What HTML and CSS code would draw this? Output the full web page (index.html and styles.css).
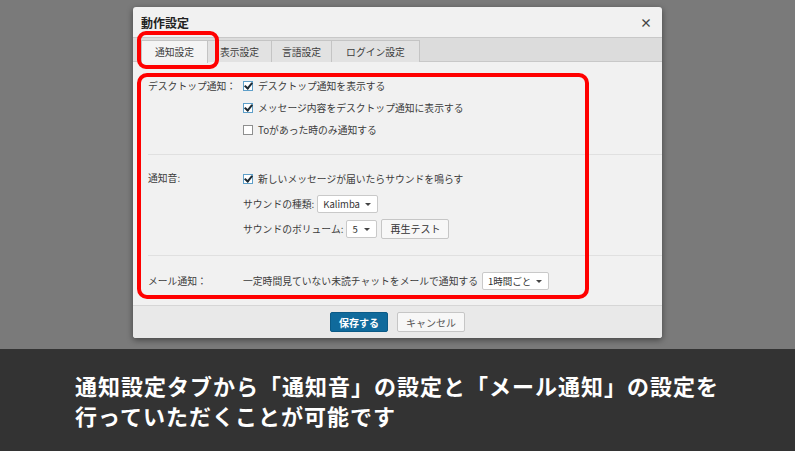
FILE: index.html
```html
<!DOCTYPE html>
<html lang="ja">
<head>
    <meta charset="UTF-8">
    <title>動作設定</title>
    <link rel="stylesheet" href="styles.css">
</head>
<body>
    <div class="stage">
        <div class="dialog">
            <div class="dialog-header">
                <div class="dialog-title">動作設定</div>
                <div class="dialog-close">×</div>
            </div>

            <div class="tab-bar">
                <div class="tab active">通知設定</div>
                <div class="tab">表示設定</div>
                <div class="tab">言語設定</div>
                <div class="tab">ログイン設定</div>
            </div>

            <div class="dialog-body">
                <div class="section section-desktop">
                    <div class="section-label">デスクトップ通知：</div>
                    <div class="section-controls">
                        <div class="row"><span class="check checked"></span>デスクトップ通知を表示する</div>
                        <div class="row"><span class="check checked"></span>メッセージ内容をデスクトップ通知に表示する</div>
                        <div class="row"><span class="check"></span>Toがあった時のみ通知する</div>
                    </div>
                </div>

                <div class="section section-sound">
                    <div class="section-label">通知音:</div>
                    <div class="section-controls">
                        <div class="row"><span class="check checked"></span>新しいメッセージが届いたらサウンドを鳴らす</div>
                        <div class="row">サウンドの種類:<span class="select select-kalimba">Kalimba<span class="caret"></span></span></div>
                        <div class="row">サウンドのボリューム:<span class="select select-volume">5<span class="caret"></span></span><span class="btn btn-test">再生テスト</span></div>
                    </div>
                </div>

                <div class="section section-mail">
                    <div class="section-label">メール通知：</div>
                    <div class="section-controls">
                        <div class="row">一定時間見ていない未読チャットをメールで通知する<span class="select select-interval">1時間ごと<span class="caret"></span></span></div>
                    </div>
                </div>
            </div>

            <div class="dialog-footer">
                <span class="btn btn-primary">保存する</span>
                <span class="btn btn-cancel">キャンセル</span>
            </div>

            <!-- annotation marks -->
            <div class="mark mark-tab"></div>
            <div class="mark mark-body"></div>
        </div>
    </div>

    <div class="caption">
        <p>通知設定タブから「通知音」の設定と「メール通知」の設定を</p>
        <p>行っていただくことが可能です</p>
    </div>
</body>
</html>
```

FILE: styles.css
```css
* {
    margin: 0;
    padding: 0;
    box-sizing: border-box;
}

body {
    width: 795px;
    height: 451px;
    overflow: hidden;
    font-family: "Noto Sans CJK JP", "Noto Sans", sans-serif;
    background: #333333;
}

.stage {
    height: 349px;
    background: #7a7a7a;
    padding-top: 7px;
    display: flex;
    justify-content: center;
    align-items: flex-start;
}

.dialog {
    position: relative;
    width: 529px;
    height: 331px;
    background: #f1f1f1;
    border-radius: 3px;
    box-shadow: 0 2px 6px rgba(0, 0, 0, 0.45);
    display: flex;
    flex-direction: column;
    color: #3c3c3c;
    font-size: 9.8px;
}

.dialog-header {
    height: 30px;
    padding: 0 10px 0 8px;
    display: flex;
    align-items: center;
    justify-content: space-between;
}

.dialog-title {
    font-size: 12px;
    font-weight: bold;
    color: #222;
    padding-top: 1px;
}

.dialog-close {
    font-size: 12px;
    font-weight: bold;
    color: #444;
}

.tab-bar {
    height: 25px;
    background: #dcdcdc;
    border-top: 1px solid #c8c8c8;
    border-bottom: 1px solid #c8c8c8;
    padding: 2px 0 0 8px;
    display: flex;
    align-items: stretch;
}

.tab {
    display: flex;
    align-items: center;
    justify-content: center;
    height: 22px;
    background: #e2e2e2;
    border: 1px solid #c4c4c4;
    border-left: none;
    border-bottom: none;
    color: #3c3c3c;
}

.tab:nth-child(2) { width: 64px; }
.tab:nth-child(3) { width: 60px; }
.tab:nth-child(4) { width: 88px; }

.tab.active {
    width: 67px;
    height: 23px;
    background: #f4f4f4;
    border-left: 1px solid #c4c4c4;
}

.dialog-body {
    flex: 1;
    padding: 0 0 0 15px;
    border-bottom: 1px solid #d6d6d6;
}

.section {
    display: flex;
    border-bottom: 1px solid #e0e0e0;
}

.section:last-child {
    border-bottom: none;
}

.section-desktop { padding: 13px 0 13px; }
.section-sound { padding: 11px 0 14px; }
.section-mail { padding: 13px 0 12px; }

.section-label {
    width: 95px;
    flex-shrink: 0;
    line-height: 22px;
}

.section-sound .section-label,
.section-mail .section-label {
    line-height: 24px;
}

.section-controls {
    display: flex;
    flex-direction: column;
}

.row {
    height: 22px;
    display: flex;
    align-items: center;
    white-space: nowrap;
}

.section-sound .row {
    height: 25px;
}

.section-mail .row {
    height: 24px;
}

.check {
    width: 10px;
    height: 10px;
    border: 1px solid #8e8f8f;
    background: #fff;
    margin-right: 5px;
    position: relative;
    flex-shrink: 0;
}

.check.checked {
    border-color: #5e9fc9;
}

.check.checked::after {
    content: '';
    position: absolute;
    left: 2px;
    top: -1px;
    width: 3px;
    height: 6px;
    border-right: 2px solid #1d2a33;
    border-bottom: 2px solid #1d2a33;
    transform: rotate(40deg);
}

.select {
    display: inline-flex;
    align-items: center;
    height: 18px;
    background: #fff;
    border: 1px solid #c9c9c9;
    border-radius: 2px;
    padding: 0 17px 0 5px;
    color: #333;
    position: relative;
    font-size: 9.5px;
}

.select-kalimba { margin-left: 3px; }
.select-volume { width: 31px; margin-left: 3px; }
.select-interval { margin-left: 4px; }

.caret {
    position: absolute;
    right: 6px;
    top: 7px;
    border-left: 3px solid transparent;
    border-right: 3px solid transparent;
    border-top: 3px solid #444;
}

.btn {
    display: inline-flex;
    align-items: center;
    justify-content: center;
    height: 20px;
    border-radius: 2px;
    font-size: 10px;
}

.btn-test {
    width: 68px;
    margin-left: 4px;
    background: #f7f7f7;
    border: 1px solid #c6c6c6;
    color: #333;
}

.dialog-footer {
    height: 32px;
    background: #e9e9e9;
    display: flex;
    justify-content: center;
    align-items: center;
    gap: 9px;
    border-radius: 0 0 3px 3px;
}

.btn-primary {
    width: 58px;
    background: #0f6a9c;
    border: 1px solid #0b5a86;
    color: #fff;
    font-weight: bold;
}

.btn-cancel {
    width: 68px;
    background: #f7f7f7;
    border: 1px solid #c6c6c6;
    color: #555;
}

/* red annotation frames */
.mark {
    position: absolute;
    border: 4px solid #ff0000;
    pointer-events: none;
}

.mark-tab {
    left: 4px;
    top: 24px;
    width: 82px;
    height: 38px;
    border-radius: 9px;
}

.mark-body {
    left: 4px;
    top: 66px;
    width: 452px;
    height: 226px;
    border-radius: 10px;
}

.caption {
    height: 102px;
    padding: 21px 0 0 75px;
    color: #fff;
    font-size: 22px;
    letter-spacing: 1px;
    font-weight: bold;
    line-height: 30px;
}
```
